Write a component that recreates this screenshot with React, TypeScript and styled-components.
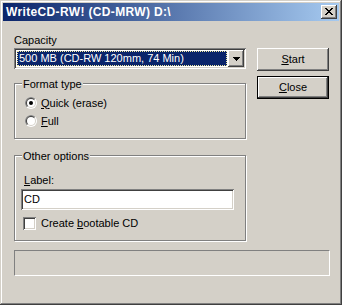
import styled, { createGlobalStyle } from "styled-components";

const GlobalStyle = createGlobalStyle`
  html, body {
    margin: 0;
    padding: 0;
    background: #d4d0c8;
  }
  body {
    font-family: "Liberation Sans", Arial, sans-serif;
    font-size: 11px;
    color: #000;
  }
`;

const face = "#d4d0c8";

const raised = `
  box-shadow: inset -1px -1px #404040, inset 1px 1px #ffffff,
    inset -2px -2px #808080, inset 2px 2px ${face};
`;

const sunken = `
  box-shadow: inset 1px 1px #808080, inset -1px -1px #ffffff,
    inset 2px 2px #404040, inset -2px -2px ${face};
`;

const Window = styled.div`
  width: 342px;
  height: 305px;
  box-sizing: border-box;
  padding: 3px;
  background: ${face};
  display: flex;
  flex-direction: column;
  box-shadow: inset -1px -1px #404040, inset 1px 1px ${face},
    inset -2px -2px #808080, inset 2px 2px #ffffff;
`;

const TitleBar = styled.div`
  height: 18px;
  flex: none;
  display: flex;
  align-items: center;
  justify-content: space-between;
  padding: 0 2px 0 3px;
  background: linear-gradient(to right, #0a246a, #a6caf0);
`;

const Title = styled.span`
  color: #fff;
  font-weight: bold;
  font-size: 12px;
  line-height: 13px;
  letter-spacing: 0.35px;
  white-space: nowrap;
`;

const CaptionButton = styled.div`
  width: 16px;
  height: 14px;
  box-sizing: border-box;
  background: ${face};
  ${raised}
  display: flex;
  padding: 3px 0 0 4px;
`;

const Body = styled.div`
  flex: 1;
  display: flex;
  flex-direction: column;
  padding: 13px 10px 0 11px;
`;

const Columns = styled.div`
  display: flex;
  gap: 11px;
`;

const LeftCol = styled.div`
  width: 232px;
  display: flex;
  flex-direction: column;
`;

const RightCol = styled.div`
  width: 72px;
  display: flex;
  flex-direction: column;
  gap: 5px;
  padding-top: 14px;
`;

const Text = styled.span`
  line-height: 13px;
  white-space: nowrap;
`;

const FieldLabel = styled(Text)<{ $indent?: number }>`
  display: block;
  height: 13px;
  margin-left: ${(p) => p.$indent ?? 0}px;
`;

const Combo = styled.div`
  margin-top: 1px;
  height: 21px;
  box-sizing: border-box;
  padding: 2px;
  background: #fff;
  ${sunken}
  display: flex;
`;

const ComboValue = styled.div`
  flex: 1;
  margin: 1px;
  padding-left: 2px;
  display: flex;
  align-items: center;
  background: #0a246a;
  color: #fff;
  outline: 1px dotted #f0e8a0;
  outline-offset: -1px;
`;

const DropButton = styled.div`
  width: 16px;
  height: 17px;
  box-sizing: border-box;
  background: ${face};
  ${raised}
  display: flex;
  align-items: center;
  justify-content: center;
`;

const Group = styled.div<{ $top: number; $height: number; $pad: string }>`
  position: relative;
  margin-top: ${(p) => p.$top}px;
  height: ${(p) => p.$height}px;
  box-sizing: border-box;
  border: 1px solid #808080;
  box-shadow: 1px 1px 0 #ffffff, inset 1px 1px 0 #ffffff;
  padding: ${(p) => p.$pad};
  display: flex;
  flex-direction: column;
`;

const GroupCaption = styled.span`
  position: absolute;
  top: -6px;
  left: 7px;
  padding: 0 1px;
  background: ${face};
  line-height: 13px;
`;

const OptionRow = styled.div<{ $h: number }>`
  height: ${(p) => p.$h}px;
  display: flex;
  align-items: center;
  gap: ${(p) => (p.$h === 18 ? 4 : 5)}px;
`;

const CheckBox = styled.div`
  width: 13px;
  height: 13px;
  box-sizing: border-box;
  background: #fff;
  ${sunken}
`;

const Input = styled.div`
  margin: 2px 0 0 -2px;
  width: 213px;
  height: 21px;
  box-sizing: border-box;
  padding: 0 3px;
  background: #fff;
  ${sunken}
  display: flex;
  align-items: center;
`;

const Button = styled.div<{ $default?: boolean }>`
  height: 23px;
  box-sizing: border-box;
  background: ${face};
  display: flex;
  align-items: center;
  justify-content: center;
  ${(p) =>
    p.$default
      ? `box-shadow: inset 0 0 0 1px #000, inset -2px -2px #404040, inset 2px 2px #ffffff,
    inset -3px -3px #808080, inset 3px 3px ${face};`
      : raised}
`;

const StatusPanel = styled.div`
  margin-top: 9px;
  width: 316px;
  height: 26px;
  box-sizing: border-box;
  border-top: 1px solid #808080;
  border-left: 1px solid #808080;
  border-bottom: 1px solid #ffffff;
  border-right: 1px solid #ffffff;
`;

function CloseGlyph() {
  const rows = [0, 1, 2, 3, 4, 5, 6];
  return (
    <svg width="8" height="7" viewBox="0 0 8 7" shapeRendering="crispEdges">
      {rows.map((i) => (
        <g key={i} fill="#000">
          <rect x={i} y={i} width="2" height="1" />
          <rect x={6 - i} y={i} width="2" height="1" />
        </g>
      ))}
    </svg>
  );
}

function DownArrow() {
  return (
    <svg width="7" height="4" viewBox="0 0 7 4" shapeRendering="crispEdges">
      <rect x="0" y="0" width="7" height="1" fill="#000" />
      <rect x="1" y="1" width="5" height="1" fill="#000" />
      <rect x="2" y="2" width="3" height="1" fill="#000" />
      <rect x="3" y="3" width="1" height="1" fill="#000" />
    </svg>
  );
}

function Radio({ checked }: { checked?: boolean }) {
  const half = (r: number) => {
    const d = r * Math.SQRT1_2;
    return `M${6 - d} ${6 + d} A${r} ${r} 0 0 1 ${6 + d} ${6 - d} Z`;
  };
  return (
    <svg width="12" height="12" viewBox="0 0 12 12">
      <circle cx="6" cy="6" r="6" fill="#ffffff" />
      <path d={half(6)} fill="#808080" />
      <circle cx="6" cy="6" r="5" fill={face} />
      <path d={half(5)} fill="#404040" />
      <circle cx="6" cy="6" r="4" fill="#ffffff" />
      {checked && <circle cx="6" cy="6" r="2" fill="#000" />}
    </svg>
  );
}

export default function App() {
  return (
    <>
      <GlobalStyle />
      <Window>
        <TitleBar>
          <Title>WriteCD-RW! (CD-MRW) D:\</Title>
          <CaptionButton>
            <CloseGlyph />
          </CaptionButton>
        </TitleBar>
        <Body>
          <Columns>
            <LeftCol>
              <FieldLabel>Capacity</FieldLabel>
              <Combo>
                <ComboValue>
                  <Text>500 MB (CD-RW 120mm, 74 Min)</Text>
                </ComboValue>
                <DropButton>
                  <DownArrow />
                </DropButton>
              </Combo>

              <Group $top={14} $height={56} $pad="10px 0 0 10px">
                <GroupCaption>Format type</GroupCaption>
                <OptionRow $h={18}>
                  <Radio checked />
                  <Text>
                    <u>Q</u>uick (erase)
                  </Text>
                </OptionRow>
                <OptionRow $h={18}>
                  <Radio />
                  <Text>
                    <u>F</u>ull
                  </Text>
                </OptionRow>
              </Group>

              <Group $top={16} $height={86} $pad="18px 0 0 8px">
                <GroupCaption>Other options</GroupCaption>
                <FieldLabel $indent={1}>
                  <u>L</u>abel:
                </FieldLabel>
                <Input>
                  <Text>CD</Text>
                </Input>
                <OptionRow $h={13} style={{ marginTop: 7 }}>
                  <CheckBox />
                  <Text>
                    Create <u>b</u>ootable CD
                  </Text>
                </OptionRow>
              </Group>
            </LeftCol>

            <RightCol>
              <Button>
                <Text>
                  <u>S</u>tart
                </Text>
              </Button>
              <Button $default>
                <Text>
                  <u>C</u>lose
                </Text>
              </Button>
            </RightCol>
          </Columns>
          <StatusPanel />
        </Body>
      </Window>
    </>
  );
}
